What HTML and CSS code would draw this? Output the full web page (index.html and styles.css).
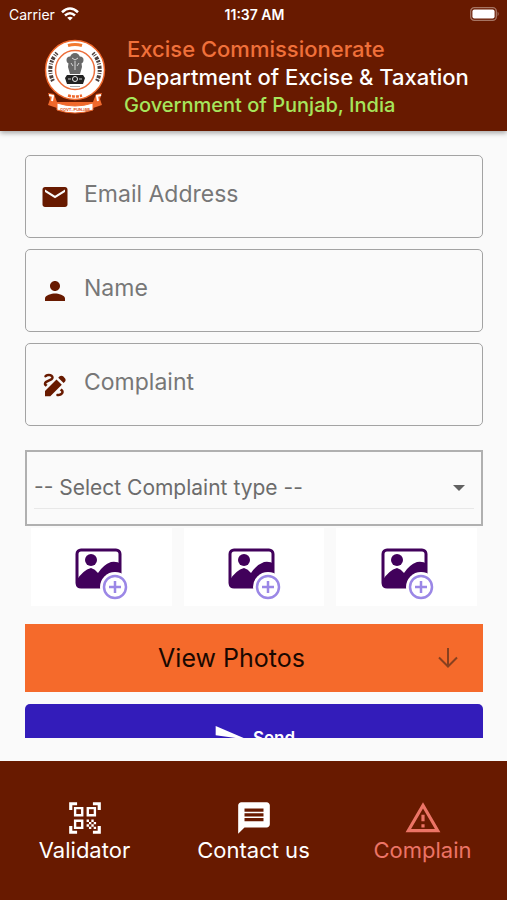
FILE: index.html
```html
<!DOCTYPE html>
<html lang="en">
<head>
<meta charset="utf-8">
<meta name="viewport" content="width=device-width, initial-scale=1">
<title>Excise Commissionerate</title>
<link rel="stylesheet" href="styles.css">
</head>
<body>
<svg class="sprite" aria-hidden="true">
  <symbol id="add-photo" viewBox="0 0 54 54">
    <rect x="3" y="3" width="43" height="37" rx="4" fill="#fff" stroke="#41015b" stroke-width="3"/>
    <circle cx="17" cy="13" r="6" fill="#41015b"/>
    <path d="M2 34 Q9 23 17 21 Q21 22 24 26 Q29 18 37 15 Q43 14 47 17 V37 Q47 41 43 41 H6 Q2 41 2 37Z" fill="#41015b"/>
    <circle cx="41" cy="40" r="15" fill="#fff"/>
    <circle cx="41" cy="40" r="11" fill="#fff" stroke="#9b87e6" stroke-width="2.500"/>
    <path d="M41 34v12M35 40h12" stroke="#9b87e6" stroke-width="2.500"/>
  </symbol>
</svg>
<div class="app">
  <header class="header">
    <div class="status">
      <div class="carrier">
        <span>Carrier</span>
        <svg width="18" height="14" viewBox="0 0 18 14" fill="none" stroke="#fff" stroke-width="2.6" aria-hidden="true">
          <path d="M1 5.2Q9-2.2 17 5.2M4 8.5Q9 4 14 8.5"/>
          <path d="M6.2 10.7Q9 8.6 11.8 10.7L9 13.6Z" fill="#fff" stroke="none"/>
        </svg>
      </div>
      <span class="time">11:37 AM</span>
      <div class="power">
        <svg width="30" height="14" viewBox="0 0 30 14" aria-hidden="true">
          <rect x=".7" y=".7" width="25.6" height="12.6" rx="3.6" fill="none" stroke="#a67563" stroke-width="1.3"/>
          <rect x="2.4" y="2.4" width="22.2" height="9.2" rx="2" fill="#fff"/>
          <path d="M27.6 4.6q2.2 2.4 0 4.8z" fill="#a67563"/>
        </svg>
      </div>
    </div>
    <div class="brand">
      <svg class="emblem" viewBox="0 0 62 76" role="img" aria-label="Emblem">
        <path d="M4 54l6 1 3 8h36l3-8 6-1-2 6 2 6-9 3q-18 6-36 0l-9-3 2-6z" fill="#f0692c"/>
        <path d="M5 56l4 1-1 5M57 56l-4 1 1 5" stroke="#fff" stroke-width="2" fill="none"/>
        <circle cx="31" cy="31" r="29.5" fill="#fff" stroke="#f0692c" stroke-width="1.4"/>
        <circle cx="31" cy="31" r="19.5" fill="#fff" stroke="#ec6f3c" stroke-width="1.5"/>
        <path d="M24 6.5Q31 4.500 38 6.500" stroke="#f27a2f" stroke-width="3" fill="none"/>
        <path d="M24 56.500Q31 58.500 38 56.500" stroke="#f0692c" stroke-width="2.500" stroke-dasharray="3 1" fill="none"/>
        <path d="M9 42A24.500 24.500 0 0 1 13 14M53 42A24.500 24.500 0 0 0 49 14" stroke="#4d403d" stroke-width="4" stroke-dasharray="2 1 3 1.500 1 1" fill="none"/>
        <g fill="#686868">
          <circle cx="31" cy="19" r="5"/><circle cx="26" cy="21" r="3.500"/><circle cx="36" cy="21" r="3.500"/>
          <path d="M25 20h12l1 8-2 7H26l-2-7z"/>
        </g>
        <path d="M28 19l3 2 3-2M27 24l2 3M35 24l-2 3M31 22v9" stroke="#d8d8d8" fill="none"/>
        <path d="M23 36h16l2 3-2 6H23l-2-6z" fill="#222"/>
        <circle cx="31" cy="40" r="2.500" fill="none" stroke="#eee"/>
        <path d="M24 40h3M35 40h3" stroke="#ccc"/>
        <path d="M26 47.500h10" stroke="#aaa"/>
        <path d="M13 64q18 6 36 0v7q-18 6-36 0z" fill="#fff" stroke="#f0692c"/>
        <text x="31" y="72" text-anchor="middle" class="ribbon">GOVT. PUNJAB</text>
      </svg>
      <div class="titles">
        <div class="title orange">Excise Commissionerate</div>
        <div class="title">Department of Excise &amp; Taxation</div>
        <div class="subtitle">Government of Punjab, India</div>
      </div>
    </div>
  </header>

  <main class="content">
    <form class="form">
      <div class="field">
        <svg viewBox="0 0 24 24" aria-hidden="true"><path d="M20 4H4c-1.100 0-1.990.9-1.990 2L2 18c0 1.100.9 2 2 2h16c1.100 0 2-.9 2-2V6c0-1.100-.9-2-2-2zm0 4l-8 5-8-5V6l8 5 8-5v2z"/></svg>
        <input type="email" aria-label="Email Address" placeholder="Email Address">
      </div>
      <div class="field">
        <svg viewBox="0 0 24 24" aria-hidden="true"><path d="M12 12c2.210 0 4-1.790 4-4s-1.790-4-4-4-4 1.790-4 4 1.790 4 4 4zm0 2c-2.670 0-8 1.340-8 4v2h16v-2c0-2.660-5.330-4-8-4z"/></svg>
        <input type="text" aria-label="Name" placeholder="Name">
      </div>
      <div class="field">
        <svg viewBox="0 0 24 24" aria-hidden="true"><path d="M18.850 10.390l1.060-1.060c.78-.78.78-2.050 0-2.830L18.500 5.090c-.78-.78-2.050-.78-2.830 0l-1.060 1.060 4.240 4.240zm-5.660-2.830L4 16.760V21h4.240l9.190-9.190-4.240-4.250zM19 17.500c0 2.190-2.540 3.500-5 3.500-.55 0-1-.45-1-1s.45-1 1-1c1.540 0 3-.73 3-1.500 0-.47-.48-.87-1.230-1.200l1.480-1.480c1.070.63 1.750 1.470 1.750 2.680zM4.580 13.350C3.610 12.790 3 12.060 3 11c0-1.800 1.890-2.630 3.560-3.360C7.590 7.180 9 6.560 9 6c0-.41-.78-1-2-1-1.260 0-1.800.61-1.830.64-.35.41-.98.46-1.400.12-.41-.34-.49-.95-.15-1.380C3.730 4.240 4.760 3 7 3s4 1.320 4 3c0 1.870-1.930 2.720-3.640 3.470C6.420 9.880 5 10.500 5 11c0 .31.43.6 1.070.86l-1.490 1.490z"/></svg>
        <input type="text" aria-label="Complaint" placeholder="Complaint">
      </div>
      <div class="picker">
        <div class="picker-line">
          <select aria-label="Complaint type"><option>-- Select Complaint type --</option></select>
          <svg width="12" height="6" viewBox="0 0 12 6" aria-hidden="true"><path d="M0 0h12L6 6z" fill="#616161"/></svg>
        </div>
      </div>
      <div class="photos">
        <button type="button" aria-label="Add photo 1"><svg><use href="#add-photo"/></svg></button>
        <button type="button" aria-label="Add photo 2"><svg><use href="#add-photo"/></svg></button>
        <button type="button" aria-label="Add photo 3"><svg><use href="#add-photo"/></svg></button>
      </div>
      <button type="button" class="view">
        <span>View Photos</span>
        <svg width="20" height="20" viewBox="0 0 20 20" fill="none" stroke="#87401f" stroke-width="2" aria-hidden="true"><path d="M10 0v18M1 9.500l9 9 9-9"/></svg>
      </button>
      <button type="submit" class="send">
        <svg width="32" height="32" viewBox="0 0 24 24" fill="#fff" aria-hidden="true"><path d="M2.010 21L23 12 2.010 3 2 10l15 2-15 2z"/></svg>
        <span>Send</span>
      </button>
    </form>
  </main>

  <nav class="nav">
    <a href="#validator">
      <svg viewBox="0 0 24 24" aria-hidden="true"><path d="M9.500 6.500v3h-3v-3h3M11 5H5v6h6V5zM9.500 14.500v3h-3v-3h3M11 13H5v6h6v-6zM17.500 6.500v3h-3v-3h3M19 5h-6v6h6V5zM13 13h1.500v1.500H13V13zM14.500 14.500H16V16h-1.500v-1.500zM16 13h1.500v1.500H16V13zM13 16h1.500v1.500H13V16zM14.500 17.500H16V19h-1.500v-1.500zM16 16h1.500v1.500H16V16zM17.500 14.500H19V16h-1.500v-1.500zM17.500 17.500H19V19h-1.500v-1.500zM22 7h-2V4h-3V2h5v5zM22 22v-5h-2v3h-3v2h5zM2 22h5v-2H4v-3H2v5zM2 2v5h2V4h3V2H2z"/></svg>
      <span>Validator</span>
    </a>
    <a href="#contact">
      <svg viewBox="0 0 24 24" aria-hidden="true"><path d="M20 2H4c-1.100 0-1.990.9-1.990 2L2 22l4-4h14c1.100 0 2-.9 2-2V4c0-1.100-.9-2-2-2zm-2 12H6v-2h12v2zm0-3H6V9h12v2zm0-3H6V6h12v2z"/></svg>
      <span>Contact us</span>
    </a>
    <a href="#complain" class="active" aria-current="page">
      <svg viewBox="0 0 24 24" aria-hidden="true"><path d="M12 5.990L19.530 19H4.470L12 5.990M12 2L1 21h22L12 2zm1 14h-2v2h2v-2zm0-6h-2v4h2v-4z"/></svg>
      <span>Complain</span>
    </a>
  </nav>
</div>
</body>
</html>
```
FILE: styles.css
```css
* { box-sizing: border-box; }

body {
  margin: 0;
  background: #fafafa;
  font-family: Inter, "Open Sans", sans-serif;
}

button, input, select { font: inherit; }

button {
  border: 0;
  padding: 0;
  cursor: pointer;
}

.sprite {
  position: absolute;
  width: 0;
  height: 0;
}

.app {
  display: flex;
  flex-direction: column;
  height: 100vh;
}

.header {
  background: #681a00;
  color: #fff;
  padding-bottom: 12px;
  box-shadow: 0 2px 5px rgba(0, 0, 0, 0.35);
}

.status {
  display: grid;
  grid-template-columns: 1fr auto 1fr;
  align-items: center;
  height: 28px;
  padding: 0 7px 0 9px;
  font-size: 14px;
}

.carrier {
  display: flex;
  align-items: center;
  gap: 6px;
}

.time { font-weight: 600; }

.power {
  display: flex;
  justify-content: flex-end;
}

.brand {
  display: flex;
  align-items: center;
  gap: 18px;
  height: 91px;
  padding: 7px 0 0 44px;
}

.emblem {
  width: 62px;
  height: 76px;
  flex: none;
}

.ribbon {
  font-size: 4px;
  font-weight: 700;
  fill: #e0561c;
}

.titles {
  font-weight: 500;
  line-height: 28px;
  white-space: nowrap;
}

.title {
  padding-left: 3px;
  font-size: 22px;
}

.orange { color: #f0703a; }

.subtitle {
  font-size: 20px;
  color: #a6e65c;
}

.content {
  flex: 1;
  min-height: 0;
  margin-bottom: 23px;
  overflow-y: auto;
  scrollbar-width: none;
}

.form {
  display: flex;
  flex-direction: column;
  padding: 24px 24px 24px 25px;
}

.field {
  display: flex;
  align-items: center;
  gap: 14px;
  height: 83px;
  margin-bottom: 11px;
  padding: 0 14px;
  border: 1px solid #a3a3a3;
  border-radius: 5px;
}

.field svg {
  width: 30px;
  height: 30px;
  flex: none;
  fill: #681a00;
}

.field input {
  flex: 1;
  min-width: 0;
  height: 100%;
  padding: 0 0 6px;
  border: 0;
  outline: 0;
  background: transparent;
  font-size: 23px;
}

.field input::placeholder { color: #777; }

.picker {
  height: 76px;
  margin-top: 13px;
  padding: 15px 7px;
  border: 2px solid #b0b0b0;
}

.picker-line {
  display: flex;
  align-items: center;
  height: 42px;
  padding-right: 9px;
  border-bottom: 1px solid #e8e8e8;
}

.picker select {
  flex: 1;
  min-width: 0;
  height: 100%;
  padding: 0;
  border: 0;
  appearance: none;
  background: transparent;
  color: #6c6c6c;
  font-size: 21px;
}

.photos {
  display: grid;
  grid-template-columns: repeat(3, 1fr);
  gap: 12px;
  padding: 2px 6px 18px;
}

.photos button {
  display: flex;
  justify-content: center;
  align-items: center;
  height: 78px;
  padding-top: 14px;
  background: #fff;
}

.photos svg {
  width: 54px;
  height: 54px;
}

.view {
  display: flex;
  align-items: center;
  height: 68px;
  padding-right: 25px;
  background: #f56a2b;
  color: #1a0800;
  font-size: 25px;
}

.view span {
  flex: 1;
  text-align: center;
}

.send {
  display: flex;
  align-items: center;
  justify-content: center;
  gap: 8px;
  height: 68px;
  margin-top: 12px;
  border-radius: 5px;
  background: #331cba;
  color: #fff;
  font-size: 17px;
  font-weight: 600;
}

.nav {
  display: grid;
  grid-template-columns: repeat(3, 1fr);
  padding: 38px 0 37px;
  background: #681a00;
}

.nav a {
  display: flex;
  flex-direction: column;
  align-items: center;
  color: #fff;
  font-size: 22px;
  line-height: 26px;
  text-decoration: none;
}

.nav svg {
  width: 38px;
  height: 38px;
  fill: currentColor;
}

.nav .active { color: #ec7466; }
```
